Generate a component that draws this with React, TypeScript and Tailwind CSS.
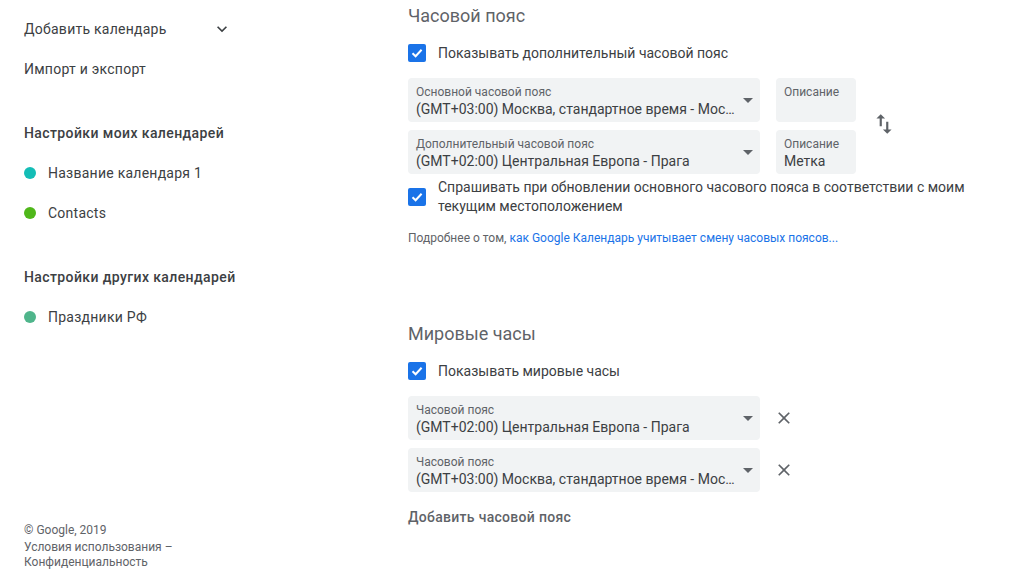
import React from "react";

const Check = () => (
  <div className="flex h-[18px] w-[18px] shrink-0 items-center justify-center rounded-[2px] bg-[#1a73e8]">
    <svg width="14" height="14" viewBox="0 0 14 14">
      <path d="M2.5 7.2 L5.6 10.2 L11.6 3.8" fill="none" stroke="white" strokeWidth="2" />
    </svg>
  </div>
);

const Arrow = () => (
  <svg width="10" height="5" viewBox="0 0 10 5" className="shrink-0">
    <path d="M0 0 L10 0 L5 5 Z" fill="#5f6368" />
  </svg>
);

const Select = ({ label, value }: { label: string; value: string }) => (
  <div className="flex h-[44px] w-[352px] shrink-0 items-center rounded-[4px] bg-[#f1f3f4] pl-2 pr-[7px]">
    <div className="flex min-w-0 flex-1 flex-col self-start pt-[6px] pr-2">
      <div className="text-[12px] leading-[16px] text-[#5f6368]">{label}</div>
      <div className="truncate text-[14px] leading-[19px] text-[#3c4043]">{value}</div>
    </div>
    <Arrow />
  </div>
);

const Desc = ({ value }: { value?: string }) => (
  <div className="h-[44px] w-[80px] shrink-0 rounded-[4px] bg-[#f1f3f4] px-2 pt-[6px]">
    <div className="text-[12px] leading-[16px] text-[#5f6368]">Описание</div>
    {value && <div className="text-[14px] leading-[19px] text-[#3c4043]">{value}</div>}
  </div>
);

const CloseIcon = () => (
  <svg width="20" height="20" viewBox="0 0 24 24" className="ml-[14px] shrink-0">
    <path
      d="M19 6.41L17.59 5 12 10.59 6.41 5 5 6.41 10.59 12 5 17.59 6.41 19 12 13.41 17.59 19 19 17.59 13.41 12z"
      fill="#5f6368"
    />
  </svg>
);

const Dot = ({ color }: { color: string }) => (
  <span className="h-[12px] w-[12px] shrink-0 rounded-full" style={{ backgroundColor: color }} />
);

const NavRow = ({ children, bold }: { children: React.ReactNode; bold?: boolean }) => (
  <div
    className={
      "flex h-[40px] w-[256px] items-center whitespace-nowrap pl-6 pr-6 text-[14px] text-[#3c4043] " +
      (bold ? "font-medium tracking-[0.4px]" : "tracking-[0.25px]")
    }
  >
    {children}
  </div>
);

export default function App() {
  return (
    <div className="flex h-[576px] w-[1024px] overflow-hidden bg-white font-['Roboto',_'Noto_Sans',_sans-serif] text-[#3c4043]">
      <aside className="flex w-[408px] shrink-0 flex-col pt-[9px]">
        <NavRow>
          <span className="flex-1">Добавить календарь</span>
          <svg width="20" height="20" viewBox="0 0 24 24">
            <path d="M16.59 8.59L12 13.17 7.41 8.59 6 10l6 6 6-6z" fill="#3c4043" />
          </svg>
        </NavRow>
        <NavRow>Импорт и экспорт</NavRow>
        <div className="mt-6">
          <NavRow bold>Настройки моих календарей</NavRow>
          <NavRow>
            <Dot color="#14bdb6" />
            <span className="ml-3">Название календаря 1</span>
          </NavRow>
          <NavRow>
            <Dot color="#4fb71a" />
            <span className="ml-3">Contacts</span>
          </NavRow>
        </div>
        <div className="mt-6">
          <NavRow bold>Настройки других календарей</NavRow>
          <NavRow>
            <Dot color="#4fb58b" />
            <span className="ml-3">Праздники РФ</span>
          </NavRow>
        </div>
        <footer className="mt-auto pb-[6px] pl-6 text-[12px] text-[#5f6368]">
          <div className="leading-[16px]">© Google, 2019</div>
          <div className="mt-[2px] leading-[15px]">
            Условия использования –
            <br />
            Конфиденциальность
          </div>
        </footer>
      </aside>

      <main className="w-[592px] shrink-0 pt-[4px]">
        <h2 className="text-[18px] leading-[24px] text-[#5f6368]">Часовой пояс</h2>
        <div className="mt-[15px] flex h-[20px] items-center">
          <Check />
          <span className="ml-3 text-[14px] leading-[20px]">Показывать дополнительный часовой пояс</span>
        </div>
        <div className="mt-[15px] flex items-start">
          <div className="flex flex-col gap-2">
            <div className="flex gap-4">
              <Select label="Основной часовой пояс" value="(GMT+03:00) Москва, стандартное время - Москва" />
              <Desc />
            </div>
            <div className="flex gap-4">
              <Select label="Дополнительный часовой пояс" value="(GMT+02:00) Центральная Европа - Прага" />
              <Desc value="Метка" />
            </div>
          </div>
          <svg width="26" height="26" viewBox="0 0 24 24" className="ml-[15px] mt-[33px]">
            <path
              d="M16 17.01V10h-2v7.01h-3L15 21l4-3.99h-3zM9 3L5 6.99h3V14h2V6.99h3L9 3z"
              fill="#5f6368"
            />
          </svg>
        </div>
        <div className="mt-[4px] flex items-center">
          <Check />
          <span className="ml-3 text-[14px] leading-[19px]">
            Спрашивать при обновлении основного часового пояса в соответствии с моим текущим местоположением
          </span>
        </div>
        <div className="mt-[14px] text-[12px] leading-[16px] text-[#5f6368]">
          Подробнее о том, <span className="text-[#1a73e8]">как Google Календарь учитывает смену часовых поясов...</span>
        </div>

        <h2 className="mt-[76px] text-[18px] leading-[24px] text-[#5f6368]">Мировые часы</h2>
        <div className="mt-[15px] flex h-[20px] items-center">
          <Check />
          <span className="ml-3 text-[14px] leading-[20px]">Показывать мировые часы</span>
        </div>
        <div className="mt-[15px] flex flex-col gap-2">
          <div className="flex items-center">
            <Select label="Часовой пояс" value="(GMT+02:00) Центральная Европа - Прага" />
            <CloseIcon />
          </div>
          <div className="flex items-center">
            <Select label="Часовой пояс" value="(GMT+03:00) Москва, стандартное время - Москва" />
            <CloseIcon />
          </div>
        </div>
        <div className="mt-[15px] text-[14px] font-medium leading-[20px] tracking-[0.3px] text-[#5f6368]">
          Добавить часовой пояс
        </div>
      </main>
    </div>
  );
}
